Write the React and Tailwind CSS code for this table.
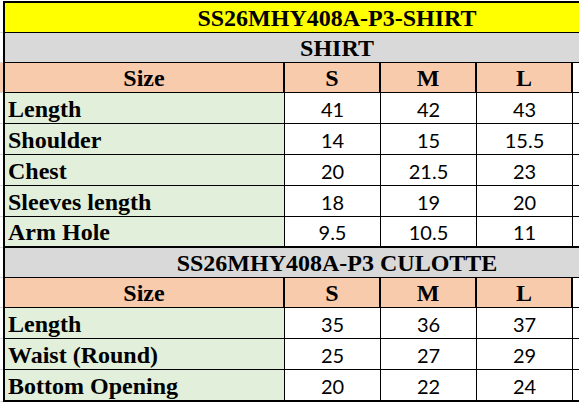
import React from "react";

const serif = "font-['Liberation_Serif',serif] font-bold text-[24px] leading-none text-black";
const digits = "font-['Lato',sans-serif] text-[20px] leading-none text-black";

const shirt = [
  ["Length", "41", "42", "43"],
  ["Shoulder", "14", "15", "15.5"],
  ["Chest", "20", "21.5", "23"],
  ["Sleeves length", "18", "19", "20"],
  ["Arm Hole", "9.5", "10.5", "11"],
];

const culotte = [
  ["Length", "35", "36", "37"],
  ["Waist (Round)", "25", "27", "29"],
  ["Bottom Opening", "20", "22", "24"],
];

// one spreadsheet row: a 3px sliver of column A, the thick left edge, then the cells
const Row = ({ h, edge = "bg-white", bottom = "border-b", children }) => (
  <div className={`flex ${h}`}>
    <div className={`w-[3px] shrink-0 ${edge} border-b border-[#d9d9d9]`} />
    <div className="w-[2px] shrink-0 bg-black" />
    <div className={`flex flex-1 border-black ${bottom}`}>{children}</div>
  </div>
);

const Banner = ({ h, bg, text }) => (
  <Row h={h}>
    <div className={`w-[664px] shrink-0 ${bg} flex items-end justify-center pb-[2px] ${serif}`}>
      {text}
    </div>
  </Row>
);

const SizeHead = ({ edge }) => (
  <Row h="h-[30px]" edge={edge}>
    <div className={`w-[280px] shrink-0 bg-[#f8cbad] border-r-2 border-black flex items-end justify-center pb-[2px] ${serif}`}>
      Size
    </div>
    {["S", "M", "L"].map((s) => (
      <div
        key={s}
        className={`w-[96px] shrink-0 bg-[#f8cbad] border-r-2 border-black flex items-end justify-center pb-[2px] ${serif}`}
      >
        {s}
      </div>
    ))}
    <div className="w-[96px] shrink-0 bg-white" />
  </Row>
);

const DataRow = ({ row, h = "h-[31px]", bottom }) => (
  <Row h={h} bottom={bottom}>
    <div className={`w-[280px] shrink-0 bg-[#e2efda] border-r border-black flex items-end pl-[3px] pb-[2px] ${serif}`}>
      {row[0]}
    </div>
    {row.slice(1).map((v, i) => (
      <div
        key={i}
        className={`w-[96px] shrink-0 bg-white border-r border-black flex items-end justify-center pb-[4px] ${digits}`}
      >
        {v}
      </div>
    ))}
    <div className="w-[96px] shrink-0 bg-white" />
  </Row>
);

export default function App() {
  return (
    <div className="w-[579px] h-[406px] overflow-hidden bg-white">
      <div className="h-[1px]" />
      <div className="flex h-[2px]">
        <div className="w-[3px] shrink-0 bg-white" />
        <div className="flex-1 bg-black" />
      </div>

      <Banner h="h-[30px]" bg="bg-[#ffff00]" text="SS26MHY408A-P3-SHIRT" />
      <Banner h="h-[30px]" bg="bg-[#d9d9d9]" text="SHIRT" />
      <SizeHead edge="bg-[#f8cbad]" />
      {shirt.map((r, i) => (
        <DataRow
          key={r[0]}
          row={r}
          bottom={i === shirt.length - 1 ? "border-b-2" : "border-b"}
        />
      ))}

      <Banner h="h-[30px]" bg="bg-[#d9d9d9]" text="SS26MHY408A-P3 CULOTTE" />
      <SizeHead />
      {culotte.map((r, i) => (
        <DataRow
          key={r[0]}
          row={r}
          h={i === culotte.length - 1 ? "h-[32px]" : "h-[31px]"}
          bottom={i === culotte.length - 1 ? "border-b-2" : "border-b"}
        />
      ))}
    </div>
  );
}
